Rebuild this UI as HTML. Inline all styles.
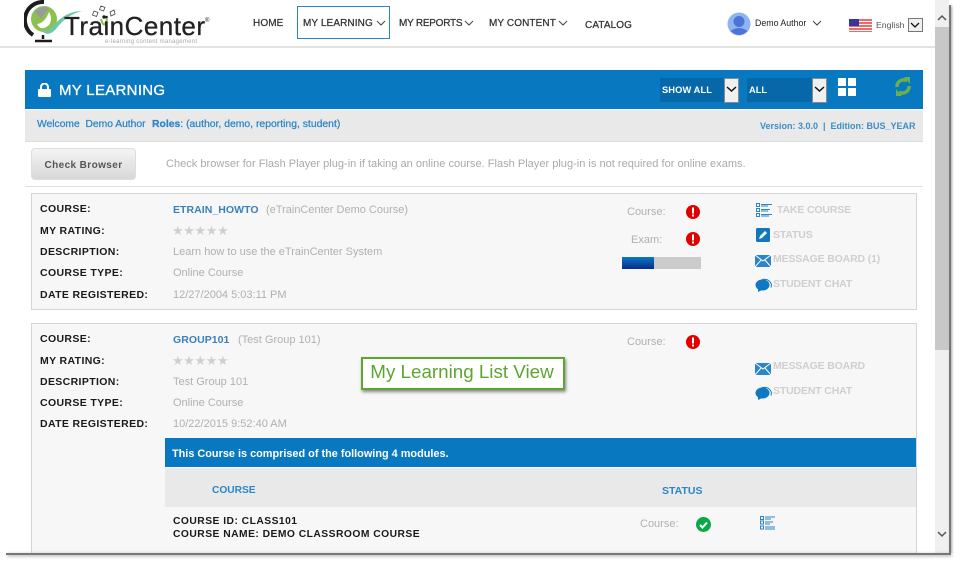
<!DOCTYPE html>
<html><head><meta charset="utf-8"><style>
html,body{margin:0;padding:0;background:#fff}
#p{position:relative;width:960px;height:565px;overflow:hidden;background:#fff;font-family:"Liberation Sans",sans-serif}
#p div,#p span.a,#p svg{position:absolute}
.t{white-space:nowrap;line-height:14px}
.n{font-size:10px;color:#333;-webkit-text-stroke:.25px #333;letter-spacing:.1px}
.l{font-size:10.5px;font-weight:bold;color:#1a1a1a;left:40px;letter-spacing:.36px}
.v{font-size:11px;color:#b0b0b0;left:173px}
.c{font-size:10.5px;font-weight:bold;color:#3a80bd;left:173px;letter-spacing:.05px}
.g{font-size:10.5px;font-weight:bold;color:#cfcfcf;letter-spacing:-.15px}
.s{font-size:11px;color:#b0b0b0}
.b{font-size:10px;font-weight:bold;color:#2a86c8}
</style></head><body><div id="p">
<!-- logo -->
<svg style="left:24px;top:0" width="190" height="46" viewBox="0 0 190 46">
<path d="M20 2A18 18 0 0 0 9 35" fill="none" stroke="#1c1c1c" stroke-width="4"/>
<path d="M19 35v4M11 41h17" stroke="#1c1c1c" stroke-width="2.500" fill="none"/>
<circle cx="20" cy="19" r="13" fill="#8cc152"/>
<path d="M11 12q5-7 14-4l-8 11z" fill="#9a9a9a"/>
<path d="M25 25q-8 7-12-1q8-1 12-12q4 7 0 13" fill="#fff"/>
<path d="M15 26q5 10 15-1q12-14 28-14q-16 4-26 18q-10 11-17-3z" fill="#6fc7a8"/>
<path d="M80 25q2-2 3-6M80 25q-2-2-3-6" stroke="#8cc152" stroke-width="2" fill="none"/>
<circle cx="80" cy="17" r="1.700" fill="#222"/>
<path d="M70 11l4 1.500-1.500 4-4-1.500zM77 6l4 1.500-1.500 3.500-4-1.500zM86 12l4-2 1 4-4 2z" fill="#fff" stroke="#444" stroke-width=".8"/>
<text x="40" y="35" font-family="Liberation Sans" font-size="26" fill="#222" stroke="#222" stroke-width=".3" textLength="141">TrainCenter</text>
<text x="181" y="22" font-family="Liberation Sans" font-size="6" fill="#222">®</text>
<text x="81" y="43" font-family="Liberation Sans" font-size="6" fill="#aaa" textLength="92">e-learning content management</text>
</svg>
<!-- nav -->
<div class="t n" style="left:253px;top:17px">HOME</div>
<div style="left:297px;top:6px;width:91px;height:31px;border:1.500px solid #2a86c8"></div>
<div class="t n" style="left:303px;top:17px">MY LEARNING</div>
<div class="t n" style="left:399px;top:17px;letter-spacing:-.25px">MY REPORTS</div>
<div class="t n" style="left:489px;top:17px">MY CONTENT</div>
<div class="t n" style="left:585px;top:19px">CATALOG</div>
<svg style="left:0;top:0" width="960" height="46"><path d="M377 21l4 4 4-4M465 21l4 4 4-4M559 21l4 4 4-4M813 21l4 4 4-4" fill="none" stroke="#444" stroke-width="1"/></svg>
<svg style="left:727px;top:12px" width="24" height="24"><circle cx="12" cy="12" r="11.500" fill="#8fb4f2"/><circle cx="12" cy="9.500" r="5.500" fill="#4a74d8"/><path d="M3.500 19q8.500-6 17 0q-8.500 8-17 0z" fill="#4a74d8"/></svg>
<div class="t" style="left:755px;top:16px;font-size:8.800px;color:#222">Demo Author</div>
<svg style="left:849px;top:19px" width="23" height="14"><rect width="23" height="13" fill="#f06a6a"/><path d="M0 2.500h23M0 5.500h23M0 8.500h23M0 11.500h23" stroke="#fff"/><rect width="10" height="7" fill="#35379a"/></svg>
<div class="t" style="left:876px;top:18px;font-size:8.700px;color:#555">English</div>
<div style="left:908px;top:18px;width:13px;height:12px;border:1px solid #777;background:#f0f0f0"></div>
<svg style="left:908px;top:18px" width="15" height="14"><path d="M3 5l4 4 4-4" fill="none" stroke="#111" stroke-width="1.300"/></svg>
<div style="left:0;top:46px;width:935px;height:1.500px;background:#e3e3e3"></div>
<!-- blue header -->
<div style="left:25px;top:70px;width:898px;height:39px;background:#0878c0"></div>
<svg style="left:38px;top:83px" width="13" height="14"><rect x="0" y="6" width="13" height="8" rx="1" fill="#fff"/><path d="M3 6V4a3.500 3.500 0 0 1 7 0v2" fill="none" stroke="#fff" stroke-width="2"/></svg>
<div class="t" style="left:59px;top:83px;font-size:15px;line-height:16px;color:#fff;letter-spacing:.3px;-webkit-text-stroke:.3px #fff">MY LEARNING</div>
<div style="left:660px;top:78px;width:64px;height:24px;background:#0668a8"></div>
<div class="t" style="left:662px;top:83px;font-size:9.300px;font-weight:bold;color:#fff;letter-spacing:.1px">SHOW ALL</div>
<div style="left:724px;top:78px;width:13px;height:23px;background:#f0f0f0;border:1px solid #888"></div>
<div style="left:747px;top:78px;width:65px;height:24px;background:#0668a8"></div>
<div class="t" style="left:749px;top:83px;font-size:9.300px;font-weight:bold;color:#fff">ALL</div>
<div style="left:812px;top:78px;width:13px;height:23px;background:#f0f0f0;border:1px solid #888"></div>
<svg style="left:724px;top:78px" width="105" height="24"><path d="M3 9l4.500 4 4.500-4M91 9l4.500 4 4.500-4" fill="none" stroke="#111" stroke-width="1.500"/></svg>
<svg style="left:838px;top:78px" width="18" height="18" fill="#fff"><rect width="8" height="8"/><rect x="10" width="8" height="8"/><rect y="10" width="8" height="8"/><rect x="10" y="10" width="8" height="8"/></svg>
<svg style="left:894px;top:77px" width="18" height="19" fill="none" stroke="#6ab04c" stroke-width="3.500"><path d="M3 10A6.500 6.500 0 0 1 13 4"/><path d="M15 9A6.500 6.500 0 0 1 5 15"/><path d="M10 0h6v7zM8 19H2v-7z" fill="#6ab04c" stroke="none"/></svg>
<!-- sub bar -->
<div style="left:25px;top:110px;width:898px;height:31px;background:#e9e9e9;border-bottom:1px solid #ddd"></div>
<div class="t" style="left:37px;top:118px;font-size:10.300px;color:#2a86c8;-webkit-text-stroke:.25px #2a86c8">Welcome&nbsp; Demo Author</div>
<div class="t" style="left:152px;top:118px;font-size:10.400px;color:#2a86c8;-webkit-text-stroke:.25px #2a86c8"><b>Roles</b>: (author, demo, reporting, student)</div>
<div class="t" style="left:760px;top:119px;font-size:9px;font-weight:bold;color:#3a8ec8">Version: 3.0.0 &nbsp;|&nbsp; Edition: BUS_YEAR</div>
<!-- check -->
<div class="t" style="left:31px;top:148px;width:103px;height:30px;border:1px solid #ddd;border-radius:4px;background:linear-gradient(#f4f4f4,#d8d8d8);text-align:center;line-height:33px;font-size:10px;font-weight:bold;color:#555;letter-spacing:.4px">Check Browser</div>
<div class="t" style="left:166px;top:157px;font-size:11.050px;color:#aaa">Check browser for Flash Player plug-in if taking an online course. Flash Player plug-in is not required for online exams.</div>
<div style="left:25px;top:186px;width:898px;height:1px;background:#e0e0e0"></div>
<!-- card 1 -->
<div style="left:31px;top:193px;width:884px;height:115px;background:#f7f7f7;border:1px solid #d5d5d5"></div>
<div class="t l" style="top:202px">COURSE:</div>
<div class="t l" style="top:224px">MY RATING:</div>
<div class="t l" style="top:245px">DESCRIPTION:</div>
<div class="t l" style="top:266px">COURSE TYPE:</div>
<div class="t l" style="top:288px">DATE REGISTERED:</div>
<div class="t c" style="top:203px">ETRAIN_HOWTO</div>
<div class="t v" style="left:266px;top:203px">(eTrainCenter Demo Course)</div>
<div class="t" style="left:172px;top:224px;font-size:13px;letter-spacing:-.4px;color:#cfcfcf">★★★★★</div>
<div class="t v" style="top:245px">Learn how to use the eTrainCenter System</div>
<div class="t v" style="top:266px">Online Course</div>
<div class="t v" style="top:288px">12/27/2004 5:03:11 PM</div>
<div class="t s" style="left:627px;top:205px">Course:</div>
<div class="t s" style="left:631px;top:233px">Exam:</div>
<svg style="left:685px;top:204px" width="16" height="44"><circle cx="8" cy="8" r="7" fill="#e00000"/><rect x="7" y="3.500" width="2" height="6" fill="#fff"/><rect x="7" y="10.500" width="2" height="2" fill="#fff"/><circle cx="8" cy="35" r="7" fill="#e00000"/><rect x="7" y="30.500" width="2" height="6" fill="#fff"/><rect x="7" y="37.500" width="2" height="2" fill="#fff"/></svg>
<div style="left:622px;top:257px;width:79px;height:12px;background:#cbcbcb"></div>
<div style="left:622px;top:257px;width:32px;height:12px;background:linear-gradient(#0a78c8,#0a2a88)"></div>
<svg style="left:756px;top:203px" width="17" height="15"><g fill="none" stroke="#2a86c8"><rect x=".5" y=".5" width="3" height="3"/><rect x=".5" y="5.500" width="3" height="3"/><rect x=".5" y="10.500" width="3" height="3"/><path d="M5 1.500h11M5 3h7M5 6.500h9M5 8h7M5 11.500h11M5 13h8"/></g></svg>
<div class="t g" style="left:777px;top:203px">TAKE COURSE</div>
<svg style="left:756px;top:228px" width="14" height="14"><rect width="14" height="14" rx="1.500" fill="#0f78c0"/><path d="M3 11l1-3 5-5 2 2-5 5z" fill="#fff"/></svg>
<div class="t g" style="left:773px;top:228px">STATUS</div>
<svg style="left:755px;top:255px" width="16" height="12"><rect width="16" height="12" rx="1" fill="#2a86c8"/><path d="M0 0l8 6 8-6M0 12l6-7M16 12l-6-7" fill="none" stroke="#fff"/></svg>
<div class="t g" style="left:773px;top:252px">MESSAGE BOARD (1)</div>
<svg style="left:755px;top:278px" width="17" height="14"><ellipse cx="7.500" cy="7" rx="7" ry="5.500" fill="#0f78c0"/><path d="M3 11l0 3 4-2z" fill="#0f78c0"/><path d="M7 1.500q7-1.500 9.500 5l-.5 3" fill="none" stroke="#0f78c0"/></svg>
<div class="t g" style="left:773px;top:277px">STUDENT CHAT</div>
<!-- card 2 -->
<div style="left:31px;top:323px;width:884px;height:240px;background:#f7f7f7;border:1px solid #d5d5d5"></div>
<div class="t l" style="top:332px">COURSE:</div>
<div class="t l" style="top:354px">MY RATING:</div>
<div class="t l" style="top:375px">DESCRIPTION:</div>
<div class="t l" style="top:396px">COURSE TYPE:</div>
<div class="t l" style="top:417px">DATE REGISTERED:</div>
<div class="t c" style="top:333px">GROUP101</div>
<div class="t v" style="left:238px;top:333px">(Test Group 101)</div>
<div class="t" style="left:172px;top:354px;font-size:13px;letter-spacing:-.4px;color:#cfcfcf">★★★★★</div>
<div class="t v" style="top:375px">Test Group 101</div>
<div class="t v" style="top:396px">Online Course</div>
<div class="t v" style="top:417px">10/22/2015 9:52:40 AM</div>
<div class="t s" style="left:627px;top:335px">Course:</div>
<svg style="left:685px;top:334px" width="16" height="16"><circle cx="8" cy="8" r="7" fill="#e00000"/><rect x="7" y="3.500" width="2" height="6" fill="#fff"/><rect x="7" y="10.500" width="2" height="2" fill="#fff"/></svg>
<svg style="left:755px;top:363px" width="16" height="12"><rect width="16" height="12" rx="1" fill="#2a86c8"/><path d="M0 0l8 6 8-6M0 12l6-7M16 12l-6-7" fill="none" stroke="#fff"/></svg>
<div class="t g" style="left:773px;top:359px">MESSAGE BOARD</div>
<svg style="left:755px;top:386px" width="17" height="14"><ellipse cx="7.500" cy="7" rx="7" ry="5.500" fill="#0f78c0"/><path d="M3 11l0 3 4-2z" fill="#0f78c0"/><path d="M7 1.500q7-1.500 9.500 5l-.5 3" fill="none" stroke="#0f78c0"/></svg>
<div class="t g" style="left:773px;top:384px">STUDENT CHAT</div>
<!-- callout -->
<div class="t" style="left:361px;top:357px;width:198px;height:29px;padding-right:2px;border:2px solid #5da52f;background:#fff;box-shadow:1px 2px 3px #888;font-size:18.800px;line-height:26px;color:#5da52f;text-align:center">My Learning List View</div>
<!-- modules -->
<div style="left:165px;top:438px;width:751px;height:29px;background:#0878c0"></div>
<div class="t" style="left:172px;top:447px;font-size:10.900px;font-weight:bold;color:#fff">This Course is comprised of the following 4 modules.</div>
<div style="left:165px;top:468px;width:751px;height:39px;background:#e9e9e9"></div>
<div class="t b" style="left:212px;top:484px;font-size:10.200px">COURSE</div>
<div class="t b" style="left:662px;top:484px;font-size:10.500px">STATUS</div>
<div class="t" style="left:173px;top:515px;font-size:10.300px;font-weight:bold;color:#1a1a1a;letter-spacing:.47px;line-height:13px">COURSE ID: CLASS101<br>COURSE NAME: DEMO CLASSROOM COURSE</div>
<div class="t s" style="left:640px;top:517px">Course:</div>
<svg style="left:696px;top:517px" width="15" height="15"><circle cx="7.500" cy="7.500" r="7.500" fill="#0ba84a"/><path d="M4 8l2.500 2.500L11 5.500" fill="none" stroke="#fff" stroke-width="2"/></svg>
<svg style="left:760px;top:516px" width="16" height="14"><g fill="none" stroke="#2a86c8"><rect x=".5" y=".5" width="3" height="3"/><rect x=".5" y="5" width="3" height="3"/><rect x=".5" y="10" width="3" height="3"/><path d="M5 1h10M5 3h6M5 6h8M5 8h5M5 11h10M5 13h10"/></g></svg>
<!-- window edge -->
<div style="left:935px;top:0;width:14px;height:553px;background:#f0f0f0"></div>
<div style="left:935px;top:27px;width:14px;height:323px;background:#c8c8c8"></div>
<svg style="left:935px;top:0" width="14" height="565"><path d="M3 20l4-4 4 4M3 532l4 4 4-4" fill="none" stroke="#555" stroke-width="1.500"/></svg>
<div style="left:949px;top:5px;width:2px;height:549px;background:#777;box-shadow:1px 1px 2px #999"></div>
<div style="left:0;top:553px;width:960px;height:12px;background:#fff"></div>
<div style="left:6px;top:553px;width:945px;height:2px;background:#777;box-shadow:1px 1px 3px #999"></div>
</div></body></html>
